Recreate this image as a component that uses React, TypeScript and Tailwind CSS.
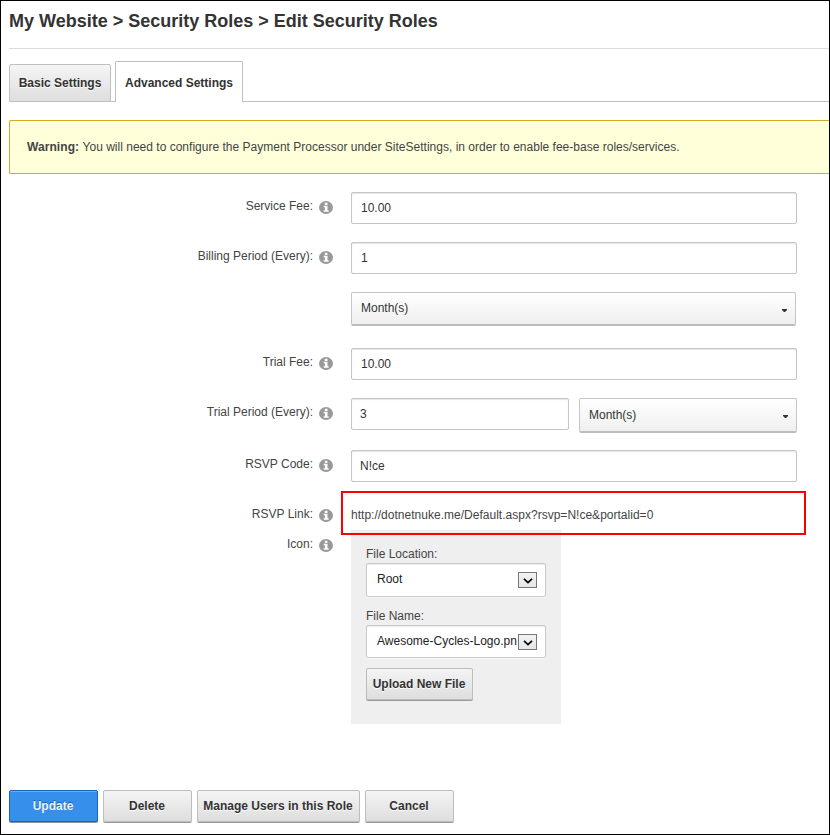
import type { ReactNode } from "react";

function InfoIcon() {
  return (
    <svg className="mt-[9px] ml-[6px] h-[13px] w-[14px] shrink-0" viewBox="0 0 14 13">
      <ellipse cx="7" cy="6.500" rx="7" ry="6.500" fill="#999" />
      <path d="M5.800 1.800h2.700v2.200H5.800zM4.700 4.800h3.800v4.400h1.200v1.600H4.700V9.200h1.200V6.300H4.700z" fill="#fff" />
    </svg>
  );
}

function Row({ label, height, labelPad, children }: { label?: string; height: string; labelPad?: string; children: ReactNode }) {
  return (
    <div className={`flex items-start ${height}`}>
      <div className={`flex w-[342px] shrink-0 justify-end pr-[18px] ${labelPad ?? ""}`}>
        {label && (
          <>
            <span className="pt-[6px] leading-[16px] whitespace-nowrap">{label}</span>
            <InfoIcon />
          </>
        )}
      </div>
      {children}
    </div>
  );
}

function TextInput({ value, width, pad = "pl-[9px]" }: { value: string; width: string; pad?: string }) {
  return (
    <div className={`h-8 shrink-0 rounded-[2px] border border-[#c5c5c5] bg-white leading-[31px] text-[#333] shadow-[inset_0_1px_1px_#e6e6e6] ${pad} ${width}`}>
      {value}
    </div>
  );
}

function Combo({ width, height, leading }: { width: string; height: string; leading: string }) {
  return (
    <div className={`flex shrink-0 items-start justify-between rounded-[2px] border border-b-2 border-[#c5c5c5] border-b-[#bcbcbc] bg-linear-to-b from-white to-[#eeefee] pr-[8px] pl-[9px] text-[#333] ${width} ${height}`}>
      <span className={leading}>Month(s)</span>
      <svg className="mt-[16px] h-[3px] w-[5px]" viewBox="0 0 5 3">
        <path d="M0 0h5v1L3 3H2L0 1z" fill="#333" />
      </svg>
    </div>
  );
}

function FileSelect({ value, height }: { value: string; height: string }) {
  return (
    <div className={`flex w-[180px] items-start rounded-[2px] border border-[#c8c8c8] bg-white pl-[10px] text-[#222] shadow-[inset_0_1px_1px_#eee,0_1px_0_#f8f8f8] ${height}`}>
      <span className="w-[141px] leading-[30px] whitespace-nowrap">{value}</span>
      <span className="mt-[8px] flex h-4 w-[19px] items-center justify-center border border-[#777] bg-linear-to-b from-[#f2f2f2] to-[#e6e6e6]">
        <svg className="mt-px ml-px h-[6px] w-[10px]" viewBox="0 0 10 6">
          <path d="M1 0.800L5 4.600L9 0.800" fill="none" stroke="#000" strokeWidth="1.700" />
        </svg>
      </span>
    </div>
  );
}

function Button({ label, width, primary }: { label: string; width: string; primary?: boolean }) {
  const tone = primary
    ? "border-[#1565bd] bg-[#358feb] text-[#e9f3ff] shadow-[inset_0_1px_0_#5fb0ff,0_1px_0_#8a939d] [text-shadow:0_-1px_0_#1d5ea5]"
    : "border-[#bdbdbd] bg-linear-to-b from-[#f4f4f4] to-[#dedede] text-[#333] shadow-[0_1px_0_#999] [text-shadow:0_1px_0_#fff]";
  return (
    <div className={`mb-px h-[32px] shrink-0 rounded-[2px] border pr-px text-center leading-[30px] font-bold whitespace-nowrap ${tone} ${width}`}>
      {label}
    </div>
  );
}

export default function App() {
  return (
    <div className="h-[835px] w-[830px] overflow-hidden border border-black bg-white pl-2 font-['Liberation_Sans',Arial,sans-serif] text-[12px] text-[#444]">
      <h1 className="h-[48px] border-b border-[#ddd] pt-[8px] text-[18px] leading-[24px] font-bold whitespace-nowrap text-[#333]">
        My Website &gt; Security Roles &gt; Edit Security Roles
      </h1>
      <div className="flex h-[53px] items-end pt-[12px] font-bold whitespace-nowrap text-[#333]">
        <div className="h-[38px] w-[102px] rounded-t-[2px] border border-[#bfbfbf] bg-linear-to-b from-[#f5f5f5] to-[#dedede] text-center leading-[37px] [text-shadow:0_1px_0_#fff]">Basic Settings</div>
        <div className="h-px w-[4px] bg-[#bfbfbf]" />
        <div className="h-[41px] w-[128px] rounded-t-[2px] border border-b-0 border-[#bfbfbf] bg-white text-center leading-[43px]">Advanced Settings</div>
        <div className="h-px flex-1 bg-[#bfbfbf]" />
      </div>
      <div className="mt-[18px] h-[54px] rounded-l-[2px] border border-r-0 border-[#ccae1c] bg-[#ffffda] pl-[17px] leading-[52px] whitespace-nowrap">
        <b className="tracking-[0.08px]">Warning:</b> <span className="tracking-[0.01px]">You will need to configure the Payment Processor under SiteSettings, in order to enable fee-base roles/services.</span>
      </div>

      <div className="pt-[18px]">
        <Row label="Service Fee:" height="h-[50px]"><TextInput value="10.00" width="w-[446px]" /></Row>
        <Row label="Billing Period (Every):" height="h-[50px]"><TextInput value="1" width="w-[446px]" /></Row>
        <Row height="h-[56px]"><Combo width="w-[445px]" height="h-[34px]" leading="leading-[31px]" /></Row>
        <Row label="Trial Fee:" height="h-[50px]"><TextInput value="10.00" width="w-[446px]" /></Row>
        <Row label="Trial Period (Every):" height="h-[52px]">
          <div className="flex gap-[10px]">
            <TextInput value="3" width="w-[218px]" pad="pl-[8px]" />
            <Combo width="w-[218px]" height="h-[35px]" leading="leading-[33px]" />
          </div>
        </Row>
        <Row label="RSVP Code:" height="h-[41px]"><TextInput value="N!ce" width="w-[446px]" pad="pl-[8px]" /></Row>
        <Row label="RSVP Link:" height="h-[39px]" labelPad="pt-[9px]">
          <div className="relative z-10 -ml-[10px] h-[44px] w-[465px] shrink-0 border-2 border-[#f00] pl-[8px] leading-[44px] tracking-[0.015px] whitespace-nowrap">
            http://dotnetnuke.me/Default.aspx?rsvp=N!ce&amp;portalid=0
          </div>
        </Row>
        <Row label="Icon:" height="h-[260px]">
          <div className="h-[194px] w-[210px] bg-[#efefef] pt-[16px] pl-[15px]">
            <div className="h-[17px] leading-[16px]">File Location:</div>
            <FileSelect value="Root" height="h-[34px]" />
            <div className="mt-[11px] h-[17px] leading-[16px]">File Name:</div>
            <FileSelect value="Awesome-Cycles-Logo.pn" height="h-[33px]" />
            <div className="pt-[10px]"><Button label="Upload New File" width="w-[107px]" /></div>
          </div>
        </Row>
      </div>
      <div className="flex gap-[5px]">
        <Button label="Update" width="w-[89px]" primary />
        <Button label="Delete" width="w-[89px]" />
        <Button label="Manage Users in this Role" width="w-[163px]" />
        <Button label="Cancel" width="w-[89px]" />
      </div>
    </div>
  );
}
